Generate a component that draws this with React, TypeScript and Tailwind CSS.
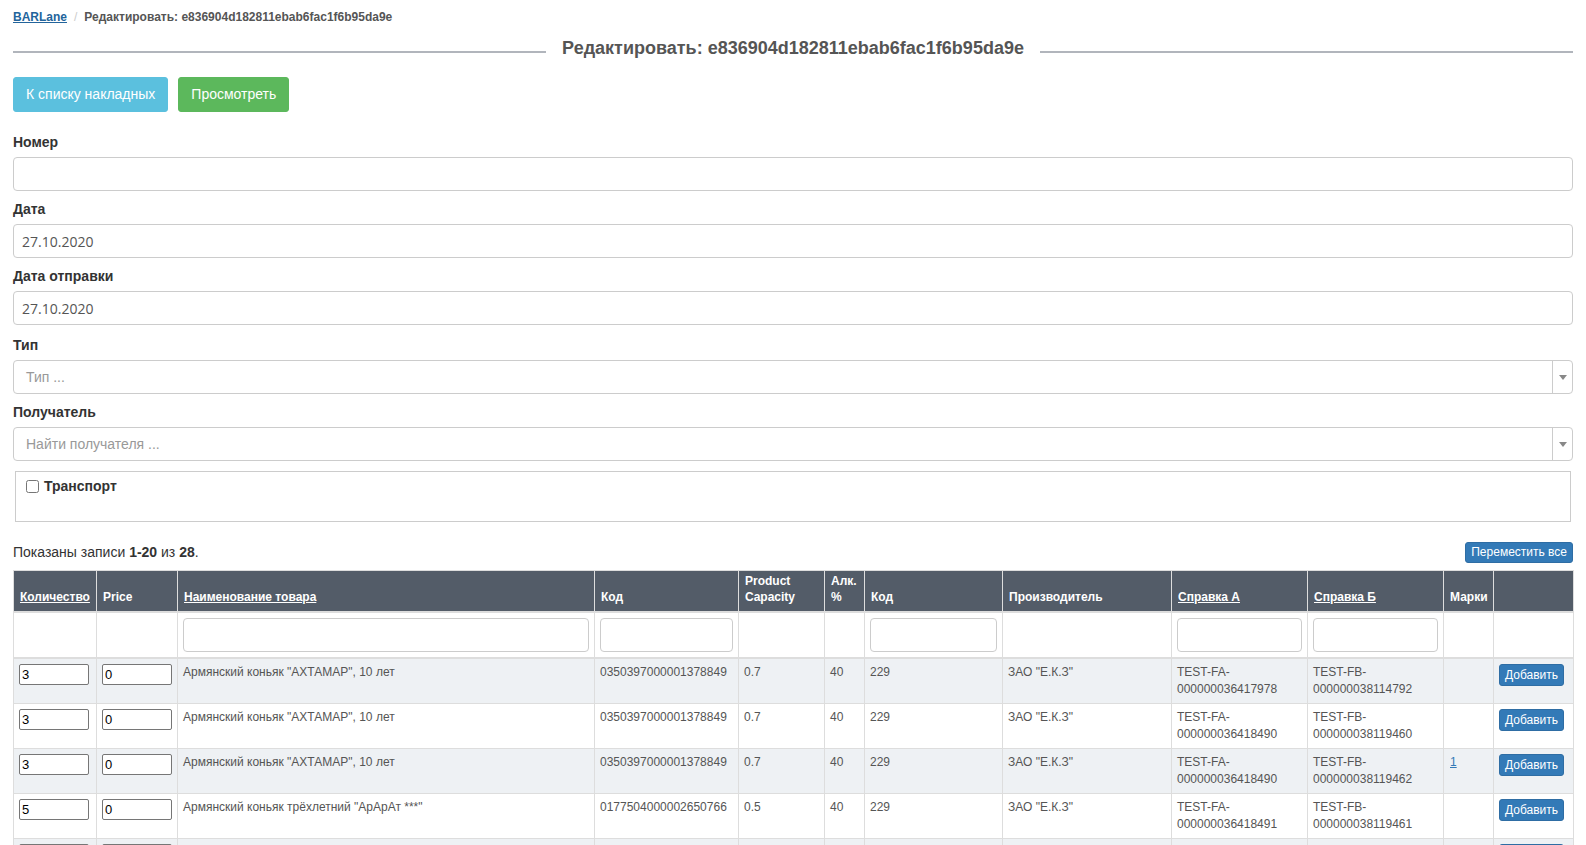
import type { ReactNode } from 'react'

type Row = {
    qty: string
    name: string
    code: string
    capacity: string
    alc: string
    code2: string
    maker: string
    refA: string
    refB: string
    marks?: string
}

const rows: Row[] = [
    { qty: '3', name: 'Армянский коньяк "АХТАМАР", 10 лет', code: '0350397000001378849', capacity: '0.7', alc: '40', code2: '229', maker: 'ЗАО "Е.К.З"', refA: 'TEST-FA-000000036417978', refB: 'TEST-FB-000000038114792' },
    { qty: '3', name: 'Армянский коньяк "АХТАМАР", 10 лет', code: '0350397000001378849', capacity: '0.7', alc: '40', code2: '229', maker: 'ЗАО "Е.К.З"', refA: 'TEST-FA-000000036418490', refB: 'TEST-FB-000000038119460' },
    { qty: '3', name: 'Армянский коньяк "АХТАМАР", 10 лет', code: '0350397000001378849', capacity: '0.7', alc: '40', code2: '229', maker: 'ЗАО "Е.К.З"', refA: 'TEST-FA-000000036418490', refB: 'TEST-FB-000000038119462', marks: '1' },
    { qty: '5', name: 'Армянский коньяк трёхлетний "АрАрАт ***"', code: '0177504000002650766', capacity: '0.5', alc: '40', code2: '229', maker: 'ЗАО "Е.К.З"', refA: 'TEST-FA-000000036418491', refB: 'TEST-FB-000000038119461' },
    { qty: '2', name: 'Армянский коньяк трёхлетний "АрАрАт ***"', code: '0177504000002650766', capacity: '0.5', alc: '40', code2: '229', maker: 'ЗАО "Е.К.З"', refA: 'TEST-FA-000000036418492', refB: 'TEST-FB-000000038119463' },
]

// справки вида TEST-FA-000... переносим после последнего дефиса
function RefCode({ value }: { value: string }) {
    const i = value.lastIndexOf('-') + 1
    return (
        <>
            {value.slice(0, i)}
            <wbr />
            {value.slice(i)}
        </>
    )
}

function Field({ label, children, className = 'mb-[8px]' }: { label: string; children: ReactNode; className?: string }) {
    return (
        <div className={className}>
            <label className="mb-[5px] block text-[14px] font-bold leading-5 text-[#333]">{label}</label>
            {children}
        </div>
    )
}

function TextInput({ value = '' }: { value?: string }) {
    return (
        <input
            readOnly
            value={value}
            className="block h-[34px] w-full rounded-[4px] border border-[#ccc] bg-white px-[8px] font-['Open_Sans',sans-serif] text-[14px] text-[#555] outline-none"
        />
    )
}

function Select({ placeholder }: { placeholder: string }) {
    return (
        <div className="flex h-[34px] w-full items-stretch rounded-[4px] border border-[#ccc] bg-white">
            <div className="flex flex-1 items-center pl-[12px] text-[14px] text-[#999]">{placeholder}</div>
            <div className="flex w-[20px] items-center justify-center border-l border-[#ccc]">
                <span className="h-0 w-0 border-x-[4px] border-t-[5px] border-x-transparent border-t-[#888]" />
            </div>
        </div>
    )
}

function Th({ children, link = false }: { children?: ReactNode; link?: boolean }) {
    return (
        <th className="border border-b-2 border-[#ddd] bg-[#535c68] px-[6px] pb-[6px] pt-[2px] text-left align-bottom text-[12px] font-bold leading-4 text-white">
            {link ? <a className="cursor-pointer underline">{children}</a> : children}
        </th>
    )
}

function FilterCell({ input = false }: { input?: boolean }) {
    return (
        <td className="border border-b-2 border-[#ddd] p-[5px]">
            {input && <input readOnly className="block h-[34px] w-full rounded-[4px] border border-[#ccc] bg-white px-2 outline-none" />}
        </td>
    )
}

const td = 'border border-[#ddd] p-[5px] align-top text-[12px] leading-[17px] text-[#555]'

export default function App() {
    return (
        <div className="min-h-screen bg-white px-[13px] pt-[9px] font-['Liberation_Sans',Arial,sans-serif] text-[#333]">
            {/* breadcrumbs */}
            <div className="flex items-center text-[12px] font-bold leading-[17px]">
                <a className="cursor-pointer text-[#23649b] underline">BARLane</a>
                <span className="px-[7px] font-normal text-[#ccc]">/</span>
                <span className="text-[#555]">Редактировать: e836904d182811ebab6fac1f6b95da9e</span>
            </div>

            {/* title with lines on both sides */}
            <div className="mt-[11px] flex items-center gap-[16px]">
                <div className="mt-[8px] h-[2px] flex-1 bg-[#b1b5bc]" />
                <h1 className="text-[18px] font-bold leading-[22px] text-[#555]">Редактировать: e836904d182811ebab6fac1f6b95da9e</h1>
                <div className="mt-[8px] h-[2px] flex-1 bg-[#b1b5bc]" />
            </div>

            <div className="mt-[18px] flex gap-[10px]">
                <button className="h-[35px] rounded-[3px] border border-[#5bc0de] bg-[#5bc0de] px-[12px] text-[14px] text-white">К списку накладных</button>
                <button className="h-[35px] rounded-[3px] border border-[#5cb85c] bg-[#5cb85c] px-[12px] text-[14px] text-white">Просмотреть</button>
            </div>

            <form className="mt-[20px]">
                <Field label="Номер">
                    <TextInput />
                </Field>
                <Field label="Дата">
                    <TextInput value="27.10.2020" />
                </Field>
                <Field label="Дата отправки" className="mb-[10px]">
                    <TextInput value="27.10.2020" />
                </Field>
                <Field label="Тип">
                    <Select placeholder="Тип ..." />
                </Field>
                <Field label="Получатель" className="mb-[10px]">
                    <Select placeholder="Найти получателя ..." />
                </Field>

                <div className="mx-[2px] h-[51px] border border-[#ccc] px-[10px] pt-[4px]">
                    <label className="flex items-center gap-[5px] text-[14px] font-bold leading-5 text-[#333]">
                        <input type="checkbox" className="m-0 h-[13px] w-[13px]" />
                        Транспорт
                    </label>
                </div>
            </form>

            <div className="mt-[20px] flex items-center justify-between">
                <div className="text-[14px] text-[#333]">
                    Показаны записи <b>1-20</b> из <b>28</b>.
                </div>
                <button className="h-[21px] rounded-[3px] border border-[#2e6da4] bg-[#337ab7] px-[5px] text-[12px] leading-[19px] text-white">
                    Переместить все
                </button>
            </div>

            <table className="mt-[7px] w-[1560px] table-fixed border-collapse">
                <colgroup>
                    <col className="w-[83px]" />
                    <col className="w-[81px]" />
                    <col className="w-[417px]" />
                    <col className="w-[144px]" />
                    <col className="w-[86px]" />
                    <col className="w-[40px]" />
                    <col className="w-[138px]" />
                    <col className="w-[169px]" />
                    <col className="w-[136px]" />
                    <col className="w-[136px]" />
                    <col className="w-[50px]" />
                    <col className="w-[80px]" />
                </colgroup>
                <thead>
                    <tr>
                        <Th link>Количество</Th>
                        <Th>Price</Th>
                        <Th link>Наименование товара</Th>
                        <Th>Код</Th>
                        <Th>Product Capacity</Th>
                        <Th>Алк. %</Th>
                        <Th>Код</Th>
                        <Th>Производитель</Th>
                        <Th link>Справка А</Th>
                        <Th link>Справка Б</Th>
                        <Th>Марки</Th>
                        <Th />
                    </tr>
                    <tr>
                        <FilterCell />
                        <FilterCell />
                        <FilterCell input />
                        <FilterCell input />
                        <FilterCell />
                        <FilterCell />
                        <FilterCell input />
                        <FilterCell />
                        <FilterCell input />
                        <FilterCell input />
                        <FilterCell />
                        <FilterCell />
                    </tr>
                </thead>
                <tbody>
                    {rows.map((r, i) => (
                        <tr key={i} className={i % 2 === 0 ? 'bg-[#eef1f4]' : 'bg-white'}>
                            <td className={td}>
                                <input readOnly value={r.qty} className="block h-[21px] w-[70px] rounded-[2px] border border-[#767676] bg-white px-[2px] text-[13px] text-black outline-none" />
                            </td>
                            <td className={td}>
                                <input readOnly value="0" className="block h-[21px] w-[70px] rounded-[2px] border border-[#767676] bg-white px-[2px] text-[13px] text-black outline-none" />
                            </td>
                            <td className={td}>{r.name}</td>
                            <td className={td}>{r.code}</td>
                            <td className={td}>{r.capacity}</td>
                            <td className={td}>{r.alc}</td>
                            <td className={td}>{r.code2}</td>
                            <td className={td}>{r.maker}</td>
                            <td className={td}>
                                <RefCode value={r.refA} />
                            </td>
                            <td className={td}>
                                <RefCode value={r.refB} />
                            </td>
                            <td className={td}>
                                {r.marks && <a className="cursor-pointer px-[1px] text-[#337ab7] underline">{r.marks}</a>}
                            </td>
                            <td className={td}>
                                <button className="h-[22px] rounded-[3px] border border-[#2e6da4] bg-[#337ab7] px-[5px] text-[12px] leading-[20px] text-white">
                                    Добавить
                                </button>
                            </td>
                        </tr>
                    ))}
                </tbody>
            </table>
        </div>
    )
}
